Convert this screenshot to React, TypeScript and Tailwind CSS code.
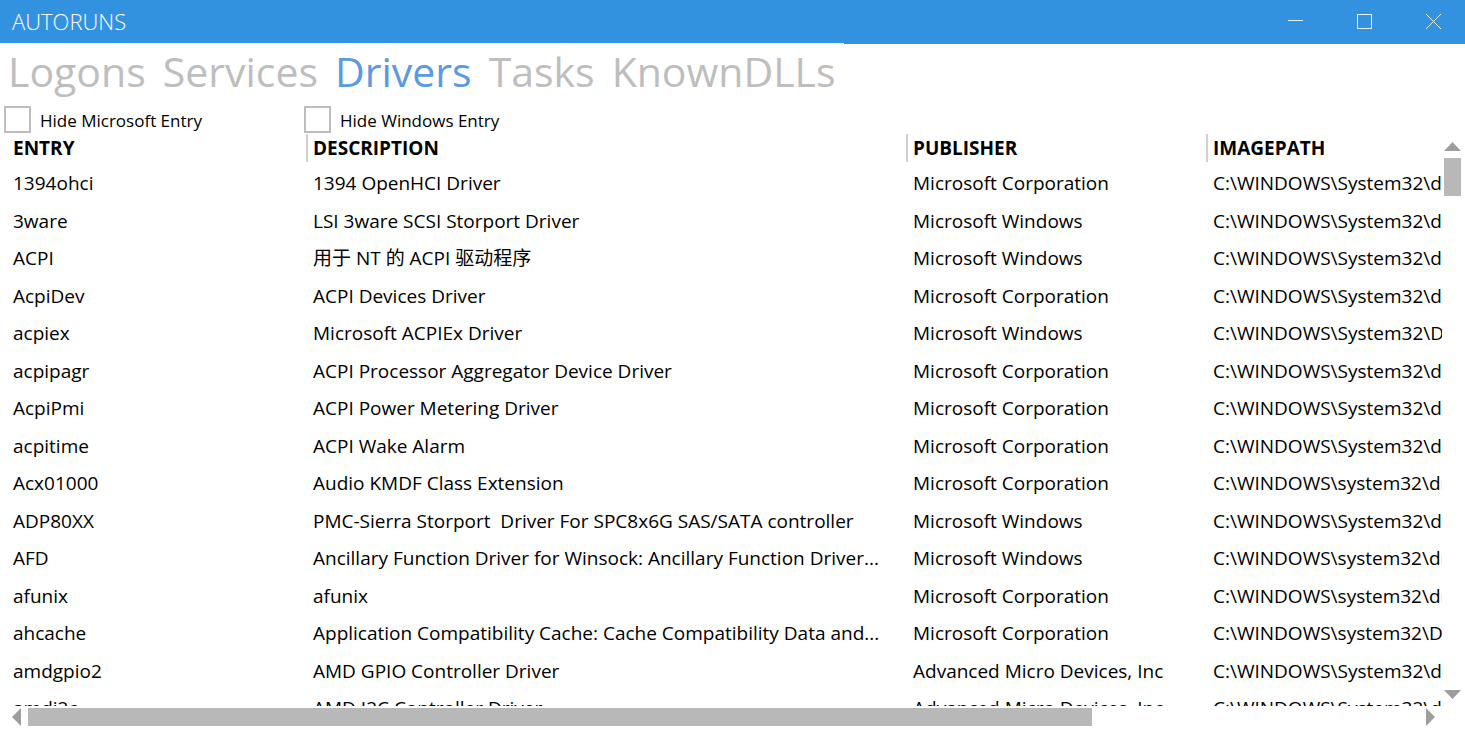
import { useState } from "react";

type Driver = {
  entry: string;
  description: string;
  publisher: string;
  path: string;
};

const MS_CORP = "Microsoft Corporation";
const MS_WIN = "Microsoft Windows";

const drivers: Driver[] = [
  { entry: "1394ohci", description: "1394 OpenHCI Driver", publisher: MS_CORP, path: "C:\\WINDOWS\\System32\\d" },
  { entry: "3ware", description: "LSI 3ware SCSI Storport Driver", publisher: MS_WIN, path: "C:\\WINDOWS\\System32\\d" },
  { entry: "ACPI", description: "用于 NT 的 ACPI 驱动程序", publisher: MS_WIN, path: "C:\\WINDOWS\\System32\\d" },
  { entry: "AcpiDev", description: "ACPI Devices Driver", publisher: MS_CORP, path: "C:\\WINDOWS\\System32\\d" },
  { entry: "acpiex", description: "Microsoft ACPIEx Driver", publisher: MS_WIN, path: "C:\\WINDOWS\\System32\\D" },
  { entry: "acpipagr", description: "ACPI Processor Aggregator Device Driver", publisher: MS_CORP, path: "C:\\WINDOWS\\System32\\d" },
  { entry: "AcpiPmi", description: "ACPI Power Metering Driver", publisher: MS_CORP, path: "C:\\WINDOWS\\System32\\d" },
  { entry: "acpitime", description: "ACPI Wake Alarm", publisher: MS_CORP, path: "C:\\WINDOWS\\System32\\d" },
  { entry: "Acx01000", description: "Audio KMDF Class Extension", publisher: MS_CORP, path: "C:\\WINDOWS\\system32\\dr" },
  { entry: "ADP80XX", description: "PMC-Sierra Storport  Driver For SPC8x6G SAS/SATA controller", publisher: MS_WIN, path: "C:\\WINDOWS\\System32\\d" },
  { entry: "AFD", description: "Ancillary Function Driver for Winsock: Ancillary Function Driver...", publisher: MS_WIN, path: "C:\\WINDOWS\\system32\\dr" },
  { entry: "afunix", description: "afunix", publisher: MS_CORP, path: "C:\\WINDOWS\\system32\\dr" },
  { entry: "ahcache", description: "Application Compatibility Cache: Cache Compatibility Data and...", publisher: MS_CORP, path: "C:\\WINDOWS\\system32\\D" },
  { entry: "amdgpio2", description: "AMD GPIO Controller Driver", publisher: "Advanced Micro Devices, Inc", path: "C:\\WINDOWS\\System32\\d" },
  { entry: "amdi2c", description: "AMD I2C Controller Driver", publisher: "Advanced Micro Devices, Inc", path: "C:\\WINDOWS\\System32\\d" },
];

const tabs = ["Logons", "Services", "Drivers", "Tasks", "KnownDLLs"];
const columns = ["ENTRY", "DESCRIPTION", "PUBLISHER", "IMAGEPATH"];

function TitleBar() {
  return (
    <header className="flex h-11 shrink-0 items-center justify-between bg-[#3392df] pb-[2px] text-white">
      <h1 className="pl-3 text-[22px] font-light leading-[42px]">AUTORUNS</h1>
      <div className="flex h-full gap-[6px] text-[#e6eef5]">
        <button aria-label="Minimize" className="flex h-full w-[63px] items-center justify-center">
          <svg width="15" height="15" viewBox="0 0 15 15" shapeRendering="crispEdges">
            <path d="M0 6.5H15" stroke="currentColor" />
          </svg>
        </button>
        <button aria-label="Maximize" className="flex h-full w-[63px] items-center justify-center">
          <svg width="15" height="15" viewBox="0 0 15 15" shapeRendering="crispEdges">
            <rect x="0.5" y="0.5" width="14" height="14" fill="none" stroke="currentColor" />
          </svg>
        </button>
        <button aria-label="Close" className="flex h-full w-[63px] items-center justify-center">
          <svg width="15" height="15" viewBox="0 0 15 15">
            <path d="M0 0L15 15M15 0L0 15" stroke="currentColor" />
          </svg>
        </button>
      </div>
    </header>
  );
}

function Filter({ label }: { label: string }) {
  return (
    <label className="flex w-[300px] items-start gap-[9px] text-[17px]">
      <input
        type="checkbox"
        className="size-[27px] appearance-none border-2 border-[#bdbdbd] bg-white checked:bg-[#3392df]"
      />
      <span className="pt-[2px] leading-[26px]">{label}</span>
    </label>
  );
}

function Arrow({ label, points, width, height }: { label: string; points: string; width: number; height: number }) {
  return (
    <button aria-label={label} className="shrink-0 text-[#9d9d9d]">
      <svg className="block" width={width} height={height} viewBox={`0 0 ${width} ${height}`}>
        <polygon points={points} fill="currentColor" />
      </svg>
    </button>
  );
}

export default function App() {
  const [active, setActive] = useState("Drivers");

  return (
    <div className="flex h-screen flex-col overflow-hidden bg-white font-['Open_Sans','Noto_Sans_CJK_SC',sans-serif] text-black">
      <TitleBar />
      <nav className="-mt-px flex w-fit shrink-0 gap-[17px] bg-white pb-1 pl-2 pr-2 text-[41px] leading-[56px]">
        {tabs.map((tab) => (
          <button
            key={tab}
            onClick={() => setActive(tab)}
            className={tab === active ? "text-[#5b99e0]" : "text-[#bebebe]"}
          >
            {tab}
          </button>
        ))}
      </nav>
      <div className="flex shrink-0 pl-1 pt-[3px]">
        <Filter label="Hide Microsoft Entry" />
        <Filter label="Hide Windows Entry" />
      </div>
      <div className="flex min-h-0 flex-1 pr-1">
        <div className="min-w-0 flex-1 overflow-hidden pl-[6px]">
          <table className="w-[1650px] table-fixed border-collapse text-left text-[19px]">
            <colgroup>
              <col className="w-[300px]" />
              <col className="w-[600px]" />
              <col className="w-[300px]" />
              <col />
            </colgroup>
            <thead>
              <tr className="h-[30px] align-top">
                {columns.map((name, i) => (
                  <th key={name} className="p-0 font-bold leading-7">
                    <div className={i === 0 ? "pl-[7px]" : "border-l-2 border-[#d0d0d0] pl-[5px]"}>{name}</div>
                  </th>
                ))}
              </tr>
            </thead>
            <tbody>
              {drivers.map((d) => (
                <tr key={d.entry} className="whitespace-pre odd:h-[38px] even:h-[37px]">
                  <td className="py-0 pl-[7px] pr-0 leading-7">{d.entry}</td>
                  <td className="py-0 pl-[7px] pr-0 leading-7">{d.description}</td>
                  <td className="py-0 pl-[7px] pr-0 leading-7">{d.publisher}</td>
                  <td className="py-0 pl-[7px] pr-0 leading-7">{d.path}</td>
                </tr>
              ))}
            </tbody>
          </table>
        </div>
        <div className="flex w-[19px] shrink-0 flex-col items-end justify-between pb-[7px] pt-2">
          <div className="flex flex-col gap-[7px]">
            <Arrow label="Scroll up" points="0,9 8.5,0 17,9" width={17} height={9} />
            <div className="h-[38px] w-[17px] bg-[#b8b8b8]" />
          </div>
          <Arrow label="Scroll down" points="0,0 8.5,9 17,0" width={17} height={9} />
        </div>
      </div>
      <div className="mb-[3px] mt-[2px] flex h-[18px] shrink-0 items-center gap-[7px] pl-3 pr-[30px]">
        <Arrow label="Scroll left" points="9,0 0,9 9,18" width={9} height={18} />
        <div className="h-full flex-1">
          <div className="h-full w-[76.5%] bg-[#b8b8b8]" />
        </div>
        <Arrow label="Scroll right" points="0,0 9,9 0,18" width={9} height={18} />
      </div>
    </div>
  );
}
